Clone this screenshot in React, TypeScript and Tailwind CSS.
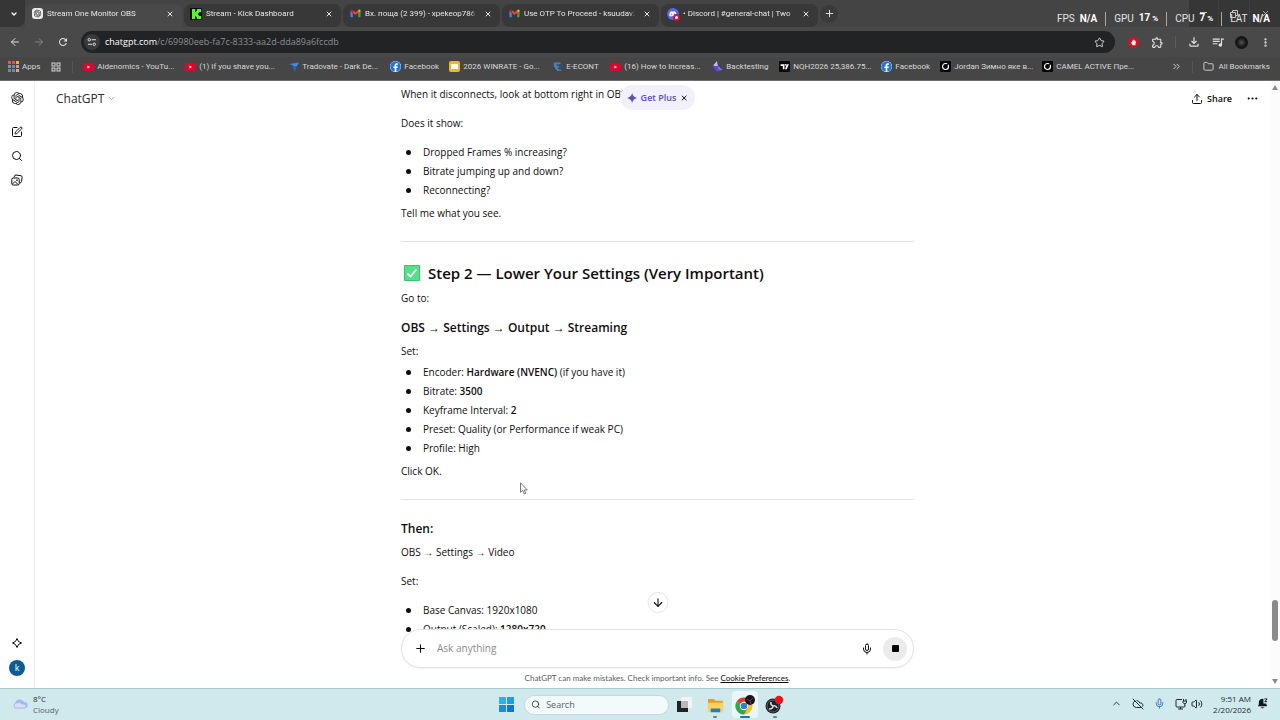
import type { ReactNode } from "react";
import {
  ArrowDown,
  ArrowLeft,
  ArrowRight,
  ChevronDown,
  ChevronUp,
  ChevronsRight,
  CloudOff,
  Ellipsis,
  EllipsisVertical,
  Folder,
  Mic,
  Plus,
  Search,
  SquarePen,
  Star,
  Upload,
  Volume2,
  X,
} from "lucide-react";
import { FaDiscord, FaFacebook } from "react-icons/fa";
import {
  MdOutlineExtension,
  MdOutlineFileDownload,
  MdOutlineGridView,
  MdOutlineQueueMusic,
  MdRefresh,
} from "react-icons/md";
import { RiOpenaiFill } from "react-icons/ri";

function GmailIcon() {
  return (
    <svg viewBox="0 0 24 18" className="w-[11px]" aria-hidden>
      <path d="M1 4v12q0 2 2 2h3V8z" fill="#4285f4" />
      <path d="M23 4v12q0 2-2 2h-3V8z" fill="#34a853" />
      <path d="M18 8V2l2-1q3 0 3 3v1z" fill="#fbbc04" />
      <path d="M6 8V2l6 5 6-5v6l-6 5z" fill="#ea4335" />
      <path d="M1 5V4q0-3 3-3l2 1v6z" fill="#c5221f" />
    </svg>
  );
}

function KickIcon() {
  return (
    <svg viewBox="0 0 12 12" className="w-3" aria-hidden>
      <path d="M0 0h12v12H0z" fill="#0b0e0f" />
      <path
        d="M2 1h3v3h1V3h1V1h4v3H9v1H8v2h1v1h2v3H7V9H6V8H5v3H2z"
        fill="#53fc18"
      />
    </svg>
  );
}

function DiscordIcon() {
  return (
    <span className="relative flex size-3 items-center justify-center rounded-full bg-[#5865f2]">
      <FaDiscord size={8} color="#fff" />
      <span className="absolute -right-px -bottom-px flex size-[7px] items-center justify-center rounded-full bg-[#d8101f]">
        <span className="size-[3px] rounded-full bg-white" />
      </span>
    </span>
  );
}

function YoutubeIcon() {
  return (
    <svg viewBox="0 0 22 16" className="w-[11px]" aria-hidden>
      <rect width="22" height="16" rx="4" fill="#e6002d" />
      <path d="M9 5l5 3-5 3z" fill="#fff" />
    </svg>
  );
}

function TradovateIcon() {
  return (
    <svg viewBox="0 0 20 20" className="w-[10px]" aria-hidden>
      <path d="M0 4l20-3-5 8H9L7 6z" fill="#3b8df0" />
      <path d="M9 8h6l-3 11-3-3z" fill="#2467c9" />
    </svg>
  );
}

function SlidesIcon() {
  return (
    <span className="flex size-[11px] items-center justify-center rounded-[2px] bg-[#f5b912]">
      <span className="h-[5px] w-[7px] bg-white" />
    </span>
  );
}

function EcontIcon() {
  return (
    <svg viewBox="0 0 20 20" className="w-[10px]" aria-hidden>
      <path d="M1 1h14v4H7l1 3h7v3H9l1 3h7v4H8L2 9z" fill="#4a7fb5" />
      <path d="M12 5l5-1v11l-4 2z" fill="#274e7e" />
    </svg>
  );
}

function BacktestIcon() {
  return (
    <svg viewBox="0 0 20 20" className="w-[11px]" aria-hidden>
      <path d="M9 0l2 11-9-3z" fill="#c9b6ff" />
      <path d="M1 10l9-1 9 8-10 2z" fill="#6a3fe0" />
      <path d="M11 9l8 8-7-2z" fill="#4aa4f5" />
    </svg>
  );
}

function TradingViewIcon() {
  return (
    <svg viewBox="0 0 20 20" className="w-[11px]" aria-hidden>
      <rect width="20" height="20" rx="2" fill="#0a0a0a" />
      <path d="M3 6h7v9H7V9H3zM14 6h4l-4 9h-3z" fill="#fff" />
      <circle cx="12" cy="7" r="1.5" fill="#fff" />
    </svg>
  );
}

function ShopIcon() {
  return (
    <svg viewBox="0 0 22 22" className="w-[11px]" aria-hidden>
      <rect width="22" height="22" rx="2" fill="#050505" />
      <circle cx="11" cy="11" r="6" fill="none" stroke="#fff" strokeWidth="2.4" />
      <path d="M11 11l6-6" stroke="#050505" strokeWidth="3" />
    </svg>
  );
}

const tabs: { title: string; icon: ReactNode; active?: boolean }[] = [
  {
    title: "Stream One Monitor OBS",
    active: true,
    icon: (
      <span className="flex size-[11px] items-center justify-center rounded-[3px] bg-[#ececec]">
        <RiOpenaiFill size={9} color="#222" />
      </span>
    ),
  },
  { title: "Stream - Kick Dashboard", icon: <KickIcon /> },
  { title: "Вх. поща (2 399) - xpekeop786", icon: <GmailIcon /> },
  { title: "Use OTP To Proceed - ksuudav2", icon: <GmailIcon /> },
  { title: "• Discord | #general-chat | Two", icon: <DiscordIcon /> },
];

const facebook = <FaFacebook size={11} color="#1b74e8" className="rounded-full bg-white" />;

const bookmarks: { title: string; icon: ReactNode; width: string }[] = [
  { title: "Aidenomics - YouTu...", icon: <YoutubeIcon />, width: "w-[102px]" },
  { title: "(1) If you shave you...", icon: <YoutubeIcon />, width: "w-[103px]" },
  { title: "Tradovate - Dark De...", icon: <TradovateIcon />, width: "w-[102px]" },
  { title: "Facebook", icon: facebook, width: "w-[59px]" },
  { title: "2026 WINRATE - Go...", icon: <SlidesIcon />, width: "w-[103px]" },
  { title: "E-ECONT", icon: <EcontIcon />, width: "w-[58px]" },
  { title: "(16) How to Increas...", icon: <YoutubeIcon />, width: "w-[102px]" },
  { title: "Backtesting", icon: <BacktestIcon />, width: "w-[67px]" },
  { title: "NQH2026 25,386.75...", icon: <TradingViewIcon />, width: "w-[102px]" },
  { title: "Facebook", icon: facebook, width: "w-[59px]" },
  { title: "Jordan Зимно яке в...", icon: <ShopIcon />, width: "w-[102px]" },
  { title: "CAMEL ACTIVE Пре...", icon: <ShopIcon />, width: "w-[102px]" },
];

const appColors = [
  "bg-[#e2574c]",
  "bg-[#d9534a]",
  "bg-[#e6b13c]",
  "bg-[#5bb55f]",
  "bg-[#4f8fe8]",
  "bg-[#d9a63c]",
  "bg-[#53a65a]",
  "bg-[#4f8fe8]",
  "bg-[#e6b13c]",
];

const stats = [
  { label: "FPS", value: "N/A" },
  { label: "GPU", value: "17", unit: "%" },
  { label: "CPU", value: "7", unit: "%" },
  { label: "LAT", value: "N/A" },
];

function TabStrip() {
  return (
    <div className="relative flex h-[27px] items-center bg-[#444444]">
      <button
        type="button"
        aria-label="Search tabs"
        className="flex h-full w-[25px] shrink-0 items-center justify-center rounded-br-lg bg-[#363636] pl-0.5 text-white"
      >
        <ChevronDown size={8} strokeWidth={4} />
      </button>
      <div role="tablist" className="flex h-full min-w-0 items-end">
        {tabs.map((tab) => (
          <div
            key={tab.title}
            className={`flex h-[23px] w-[159px] items-center gap-1 border-r-2 border-[#444444] pr-2 pb-1 pl-1.5 ${
              tab.active ? "rounded-t-lg bg-[#494949]" : "rounded-lg bg-[#383838]"
            }`}
          >
            <span className="flex w-3 shrink-0 justify-center">{tab.icon}</span>
            <button
              type="button"
              role="tab"
              aria-selected={!!tab.active}
              className="min-w-0 flex-1 overflow-hidden mask-r-from-95% text-left font-['Roboto','Noto_Sans',sans-serif] text-[8px] whitespace-nowrap text-[#e6e6e6]"
            >
              {tab.title}
            </button>
            <button type="button" aria-label="Close tab" className="ml-1 text-[#e6e6e6]">
              <X size={8} strokeWidth={3} />
            </button>
          </div>
        ))}
      </div>
      <button
        type="button"
        aria-label="New tab"
        className="flex size-[18px] items-center justify-center rounded-full bg-[#3a3a3a] text-[#e6e6e6]"
      >
        <Plus size={11} strokeWidth={2} />
      </button>
      <div className="ml-auto flex h-full bg-[#363636] text-[#c8c8c8]">
        <button type="button" aria-label="Minimize" className="flex w-[30px] justify-center border-r border-[#3e3e3e] pt-3">
          <span className="h-px w-[7px] bg-current" />
        </button>
        <button type="button" aria-label="Restore" className="flex w-[31px] items-center justify-center border-r border-[#3e3e3e]">
          <svg width="8" height="8" viewBox="0 0 8 8" fill="none" stroke="currentColor" aria-hidden>
            <path d="M.5 2.5h5v5h-5zM2.5 2V.5h5v5H6" />
          </svg>
        </button>
        <button type="button" aria-label="Close window" className="flex w-[30px] items-center justify-center">
          <X size={9} />
        </button>
      </div>

      {/* Performance overlay, drawn over the window controls */}
      <div className="pointer-events-none absolute top-2.5 right-2.5 flex items-center font-['Roboto',sans-serif] text-[10px] leading-4 text-[#e4e4e4]">
        {stats.map((s, i) => (
          <span key={s.label} className="flex items-center whitespace-nowrap">
            {i > 0 && <span className="mx-2 h-3.5 w-px bg-[#a8a8a8]" />}
            {s.label}
            <strong className="ml-[5px] font-bold text-white">
              {s.value}
              {s.unit && <small className="ml-0.5 text-[8px]">{s.unit}</small>}
            </strong>
          </span>
        ))}
      </div>
    </div>
  );
}

function Toolbar() {
  return (
    <div className="flex h-[30px] items-center bg-[#494949] pr-[9px] pl-[9px] text-[#e0e0e0]">
      <div className="flex items-center gap-3">
        <button type="button" aria-label="Back">
          <ArrowLeft size={12} />
        </button>
        <button type="button" aria-label="Forward" className="text-[#858585]">
          <ArrowRight size={12} />
        </button>
        <button type="button" aria-label="Reload">
          <MdRefresh size={12} />
        </button>
      </div>
      <div className="ml-3 flex h-[22px] flex-1 items-center gap-[5px] rounded-full bg-[#212324] pr-2.5 pl-[3px]">
        <button
          type="button"
          aria-label="Site information"
          className="flex size-4 items-center justify-center rounded-full bg-[#383a3b]"
        >
          <svg width="10" height="10" viewBox="0 0 20 20" fill="none" stroke="currentColor" strokeWidth="2" aria-hidden>
            <circle cx="4.500" cy="5.500" r="2.500" />
            <path d="M9 5.500h9M2 14.500h8" />
            <circle cx="14.500" cy="14.500" r="2.500" />
          </svg>
        </button>
        <a href="#url" className="flex-1 text-[9px] text-[#8d8f91]">
          <span className="text-white">chatgpt.com</span>/c/69980eeb-fa7c-8333-aa2d-dda89a6fccdb
        </a>
        <button type="button" aria-label="Bookmark this tab">
          <Star size={11} />
        </button>
      </div>
      <div className="ml-[13px] flex items-center">
        <button
          type="button"
          aria-label="Ad blocker"
          className="flex size-[11px] items-center justify-center rounded-full bg-[#d8101f]"
        >
          <svg viewBox="0 0 10 10" className="w-[7px]" fill="#fff" aria-hidden>
            <path d="M3 2.5V5L2 4.5 1.5 5 3.5 9h4L8 6V2.5H7V2H6V1H4.5v1z" />
          </svg>
        </button>
        <button type="button" aria-label="Extensions" className="ml-3">
          <MdOutlineExtension size={13} />
        </button>
        <span className="mx-[11px] h-3 w-px bg-[#5c5c5c]" />
        <button type="button" aria-label="Downloads">
          <MdOutlineFileDownload size={14} />
        </button>
        <button type="button" aria-label="Media controls" className="ml-2.5">
          <MdOutlineQueueMusic size={14} />
        </button>
        <span className="ml-2.5 size-[13px] rounded-full bg-radial from-[#555] via-[#161616] to-[#0a0a0a]" />
        <button type="button" aria-label="Menu" className="ml-3">
          <EllipsisVertical size={11} strokeWidth={3} />
        </button>
      </div>
    </div>
  );
}

function BookmarksBar() {
  return (
    <nav className="flex h-6 items-center border-b border-[#6f6f6f] bg-[#464646] pb-1 pl-2 font-['Roboto','Noto_Sans',sans-serif] text-[8px] text-[#d8d8d8]">
      <a href="#apps" className="flex items-center gap-[3px]">
        <span className="grid grid-cols-3 gap-px">
          {appColors.map((c, i) => (
            <span key={i} className={`size-[3px] ${c}`} />
          ))}
        </span>
        Apps
      </a>
      <a href="#groups" aria-label="Tab groups" className="ml-2.5">
        <MdOutlineGridView size={12} />
      </a>
      <span className="mx-2.5 h-3 w-px bg-[#555]" />
      <div className="flex min-w-0 overflow-hidden whitespace-nowrap">
        {bookmarks.map((b, i) => (
          <a key={i} href="#bookmark" className={`flex shrink-0 items-center gap-[3px] ${b.width}`}>
            <span className="flex w-[11px] shrink-0 justify-center">{b.icon}</span>
            {b.title}
          </a>
        ))}
      </div>
      <div className="ml-auto flex shrink-0 items-center gap-2.5 pr-2.5">
        <ChevronsRight size={11} />
        <span className="h-3 w-px bg-[#555]" />
        <a href="#all" className="flex items-center gap-1">
          <Folder size={11} />
          All Bookmarks
        </a>
      </div>
    </nav>
  );
}

function Sidebar() {
  return (
    <aside className="flex w-[35px] shrink-0 flex-col items-center border-r border-[#ededed] pt-2.5 pb-3">
      <a href="#home" aria-label="Home">
        <RiOpenaiFill size={15} />
      </a>
      <div className="mt-5 flex flex-col gap-3">
        <button type="button" aria-label="New chat">
          <SquarePen size={12} />
        </button>
        <button type="button" aria-label="Search chats">
          <Search size={12} />
        </button>
        <button type="button" aria-label="Images">
          <svg width="12" height="12" viewBox="0 0 24 24" fill="none" stroke="currentColor" strokeWidth="2" aria-hidden>
            <rect x="1.500" y="8" width="15" height="14" rx="3" />
            <path d="M6 7l1-3q.7-2.300 3-2l10 1.500q2.500.500 2.300 3L21 15q-.5 2.500-3 3" />
            <path d="M3 20l5-5 6 6" />
            <circle cx="12" cy="12.500" r="1" />
          </svg>
        </button>
      </div>
      <button type="button" aria-label="Upgrade" className="mt-auto">
        <svg width="10" height="10" viewBox="0 0 20 20" fill="none" stroke="currentColor" strokeWidth="2" aria-hidden>
          <path d="M10 1q1.500 7.500 9 9-7.500 1.500-9 9-1.500-7.500-9-9 7.500-1.500 9-9z" />
        </svg>
      </button>
      <button
        type="button"
        className="mt-3 flex size-4 items-center justify-center rounded-full bg-[#0b5c94] text-[9px] text-white"
      >
        k
      </button>
    </aside>
  );
}

function Bullet({ children }: { children: ReactNode }) {
  return (
    <li className="flex items-center gap-3 pl-[5px]">
      <span className="size-[5px] shrink-0 rounded-full bg-[#0d0d0d]" />
      <span>{children}</span>
    </li>
  );
}

function Conversation() {
  return (
    <article className="mx-auto w-full max-w-[513px] pt-1 text-[10px] leading-[19px]">
      <p>When it disconnects, look at bottom right in OBS.</p>
      <p className="my-2.5">Does it show:</p>
      <ul>
        <Bullet>Dropped Frames % increasing?</Bullet>
        <Bullet>Bitrate jumping up and down?</Bullet>
        <Bullet>Reconnecting?</Bullet>
      </ul>
      <p className="mt-1">Tell me what you see.</p>
      <hr className="mt-[18px] mb-[19px] border-[#e3e3e3]" />
      <h2 className="flex items-center gap-2 pl-[3px] text-[15px] leading-6 font-semibold">
        <svg width="16" height="16" viewBox="0 0 16 16" role="img" aria-label="Done">
          <rect width="16" height="16" rx="1" fill="#35c46b" />
          <rect x="1" y="1" width="14" height="14" fill="#55df87" />
          <path d="M3.500 8.500l3 3 6-7" fill="none" stroke="#fff" strokeWidth="1.800" />
        </svg>
        Step 2 — Lower Your Settings (Very Important)
      </h2>
      <p className="mt-1">Go to:</p>
      <h3 className="mt-2.5 text-xs leading-5 font-semibold">
        OBS → Settings → Output → Streaming
      </h3>
      <p className="mt-1">Set:</p>
      <ul className="mt-0.5">
        <Bullet>
          Encoder: <strong className="font-semibold">Hardware (NVENC)</strong> (if you have it)
        </Bullet>
        <Bullet>
          Bitrate: <strong className="font-semibold">3500</strong>
        </Bullet>
        <Bullet>
          Keyframe Interval: <strong className="font-semibold">2</strong>
        </Bullet>
        <Bullet>Preset: Quality (or Performance if weak PC)</Bullet>
        <Bullet>Profile: High</Bullet>
      </ul>
      <p className="mt-1">Click OK.</p>
      <hr className="mt-[18px] mb-[19px] border-[#e3e3e3]" />
      <h3 className="text-xs leading-5 font-semibold">Then:</h3>
      <p className="mt-1">OBS → Settings → Video</p>
      <p className="my-2.5">Set:</p>
      <ul>
        <Bullet>Base Canvas: 1920x1080</Bullet>
        <Bullet>
          Output (Scaled): <strong className="font-semibold">1280x720</strong>
        </Bullet>
      </ul>
    </article>
  );
}

function Composer() {
  return (
    <footer className="relative z-10 mx-auto -mt-5 w-full max-w-[513px]">
      <form className="flex h-[39px] items-center rounded-full border border-[#e2e2e2] bg-white pr-1.5 pl-3 shadow-xs">
        <button type="button" aria-label="Add files">
          <Plus size={13} />
        </button>
        <input
          type="text"
          aria-label="Ask anything"
          placeholder="Ask anything"
          className="ml-2.5 min-w-0 flex-1 text-[10px] outline-none placeholder:text-[#8b8b8b]"
        />
        <button type="button" aria-label="Dictate">
          <Mic size={12} />
        </button>
        <button
          type="button"
          aria-label="Stop"
          className="ml-2.5 flex size-6 items-center justify-center rounded-full bg-[#ebebeb]"
        >
          <span className="size-[7px] rounded-[1px] bg-black" />
        </button>
      </form>
      <p className="text-center font-['Lato',sans-serif] text-[8px] leading-5 text-[#5d5d5d]">
        ChatGPT can make mistakes. Check important info. See{" "}
        <a href="#cookies" className="text-[#0d0d0d] underline">
          Cookie Preferences
        </a>
        .
      </p>
    </footer>
  );
}

function ChatPage() {
  return (
    <main className="relative flex min-w-0 flex-1 flex-col">
      <div className="absolute inset-x-0 top-0 z-10 flex h-[35px] items-center justify-between pr-[21px] pl-[21px]">
        <button type="button" className="flex items-center gap-[3px] text-[12px] text-[#2b2b2b]">
          ChatGPT
          <ChevronDown size={9} className="text-[#8a8a8a]" />
        </button>
        <div className="flex items-center gap-3.5">
          <button type="button" className="flex items-center gap-1 text-[9px] font-semibold">
            <Upload size={12} />
            Share
          </button>
          <button type="button" aria-label="More">
            <Ellipsis size={13} strokeWidth={2} />
          </button>
        </div>
      </div>
      <div className="absolute top-1 left-1/2 z-10 flex h-[25px] -translate-x-1/2 items-center gap-1 rounded-full bg-[#f2f0fb] px-[7px] text-[9px] font-semibold text-[#5d50b8]">
        <svg width="10" height="10" viewBox="0 0 20 20" fill="currentColor" aria-hidden>
          <path d="M10 0q1.500 8 10 10-8.500 2-10 10-1.500-8-10-10 8.500-2 10-10z" />
        </svg>
        <button type="button">Get Plus</button>
        <button type="button" aria-label="Dismiss" className="text-[#0d0d0d]">
          <X size={8} strokeWidth={3} />
        </button>
      </div>

      <div className="relative min-h-0 flex-1 overflow-hidden">
        <Conversation />
        <button
          type="button"
          aria-label="Scroll to bottom"
          className="absolute bottom-9 left-1/2 flex size-[21px] -translate-x-1/2 items-center justify-center rounded-full border border-[#e6e6e6] bg-white"
        >
          <ArrowDown size={13} />
        </button>
        {/* Mouse pointer */}
        <svg
          className="absolute top-[401px] left-[485px]"
          width="8"
          height="13"
          viewBox="0 0 8 13"
          fill="#fff"
          stroke="#555"
          strokeWidth=".8"
          aria-hidden
        >
          <path d="M.5.800v9.500l2.200-2 1.600 3.700 1.500-.7L4.300 8h3z" />
        </svg>
      </div>
      <Composer />

      <div className="absolute inset-y-0 right-0 flex w-[10px] flex-col items-center justify-between bg-[#fcfcfc] py-1">
        <span className="border-x-[3px] border-b-[5px] border-x-transparent border-b-[#8a8a8a]" />
        <span className="mt-auto mb-[38px] h-[41px] w-[6px] rounded-full bg-[#8a8a8a]" />
        <span className="border-x-[3px] border-t-[5px] border-x-transparent border-t-[#8a8a8a]" />
      </div>
    </main>
  );
}

function ChromeIcon() {
  return (
    <svg viewBox="0 0 22 22" className="w-[22px]" aria-hidden>
      <circle cx="10" cy="12" r="8.500" fill="#fbc116" />
      <path d="M10 12L2.600 7.700A8.500 8.500 0 0 1 17.400 7.700H10z" fill="#e33b2e" />
      <path d="M10 12l-7.400-4.300A8.500 8.500 0 0 0 10 20.500l3.700-6.400z" fill="#2da94f" />
      <circle cx="10" cy="12" r="4.200" fill="#fff" />
      <circle cx="10" cy="12" r="3.300" fill="#2f7de1" />
      <circle cx="16" cy="6" r="5" fill="#1a1514" />
      <path d="M13 5l3 2 3-3M16 7l1 3" stroke="#574a42" fill="none" />
    </svg>
  );
}

function ObsIcon() {
  return (
    <svg viewBox="0 0 20 20" className="w-5" aria-hidden>
      <circle cx="8" cy="11" r="7.500" fill="#20202a" />
      <circle cx="8" cy="11" r="6" fill="none" stroke="#77777f" strokeWidth=".7" />
      <path
        d="M8 11q-3-1-2-4M8 11q3-1 4 2M8 11q0 3-4 3"
        fill="none"
        stroke="#d5d5dc"
        strokeWidth="1.600"
      />
      <circle cx="14" cy="5" r="4.200" fill="#f0101c" />
    </svg>
  );
}

function Taskbar() {
  return (
    <footer className="grid h-8 shrink-0 grid-cols-[1fr_auto_1fr] items-center border-t border-[#a8cccf] bg-[#d0e9ec] text-[8px] leading-[11px] text-[#1d2b2e]">
      <button type="button" className="flex items-center gap-[5px] pb-0.5 pl-3 text-left">
        <svg viewBox="0 0 20 14" className="w-4" aria-hidden>
          <path d="M4 13a4 4 0 0 1 0-7 6 6 0 0 1 11-1 4 4 0 0 1 1 8z" fill="#a9b8ea" />
          <path d="M4 12a3 3 0 0 1 1-5q5-2 7 1 5-1 5 4z" fill="#d6ddf7" />
        </svg>
        <span>
          8°C
          <br />
          <span className="text-[#546468]">Cloudy</span>
        </span>
      </button>

      <div className="flex h-full items-center pl-2.5">
        <button type="button" aria-label="Start" className="grid grid-cols-2 gap-px">
          <span className="size-[7px] bg-[#2fb0ee]" />
          <span className="size-[7px] bg-[#1e9ce4]" />
          <span className="size-[7px] bg-[#1b8fdc]" />
          <span className="size-[7px] bg-[#0d78cf]" />
        </button>
        <label className="ml-2.5 flex h-[20px] w-[145px] items-center gap-1.5 rounded-full border border-[#c5dadd] bg-[#f2fafb] px-1.5">
          <Search size={11} strokeWidth={2} />
          <input
            type="text"
            aria-label="Search"
            placeholder="Search"
            className="w-full min-w-0 text-[9px] outline-none placeholder:text-[#54666a]"
          />
        </label>
        <div className="flex h-full items-center">
          <button type="button" aria-label="Task view" className="flex h-full w-[30px] items-center justify-center">
            <svg viewBox="0 0 16 16" className="w-4" aria-hidden>
              <rect x="5" width="11" height="11" fill="#f4f4f4" />
              <path d="M1 4h4v7h7v4H1z" fill="#222" />
              <rect x="5" y="4" width="7" height="7" fill="#b9b9b9" />
            </svg>
          </button>
          <button type="button" aria-label="File Explorer" className="flex h-full w-[33px] flex-col items-center justify-end gap-[3px] pb-0.5">
            <svg viewBox="0 0 18 16" className="w-[17px]" aria-hidden>
              <path d="M1 2q0-1 1-1h5l2 2h7q1 0 1 1v10H1z" fill="#e0a21c" />
              <path d="M1 5h16v9q0 1-1 1H2q-1 0-1-1z" fill="#ffd257" />
              <path d="M4 15v-3q0-1 1-1h8q1 0 1 1v3z" fill="#1c7fc9" />
            </svg>
            <span className="h-0.5 w-1 rounded-full bg-[#6e8083]" />
          </button>
          <button type="button" aria-label="Chrome" className="flex h-[27px] w-[26px] flex-col items-center justify-end rounded-sm bg-[#eaf6f7]">
            <ChromeIcon />
            <span className="h-0.5 w-2.5 rounded-full bg-[#1674c8]" />
          </button>
          <button type="button" aria-label="OBS Studio" className="flex h-full w-[34px] flex-col items-center justify-end gap-px pb-0.5">
            <ObsIcon />
            <span className="h-0.5 w-1 rounded-full bg-[#6e8083]" />
          </button>
        </div>
      </div>

      <div className="flex items-center justify-end pr-3 pb-0.5">
        <ChevronUp size={11} />
        <CloudOff size={12} className="ml-2.5" />
        <Mic size={11} className="ml-2.5 text-[#3a6fb5]" />
        <svg viewBox="0 0 24 24" className="ml-2.5 w-3" fill="none" stroke="currentColor" strokeWidth="2" aria-hidden>
          <path d="M14 3H4q-2 0-2 2v11q0 2 2 2h14q2 0 2-2v-2M6 22h10M11 18v4" />
          <path d="M17 2v4M22 2v4M16 6h7v3q0 2-3.500 2T16 9zM19.500 11v4" />
        </svg>
        <Volume2 size={12} className="ml-1" />
        <time className="ml-2.5 text-right">
          9:51 AM
          <br />
          2/20/2026
        </time>
        <svg viewBox="0 0 12 12" className="ml-1.5 w-[11px]" aria-hidden>
          <path d="M2 5a4 4 0 0 1 5-4v5h3l1 3H1l1-2zM4 10h4l-2 1.500z" fill="#101718" />
          <path d="M8 1h3L8.500 4H11" fill="none" stroke="#101718" />
        </svg>
      </div>
    </footer>
  );
}

export default function App() {
  return (
    <div className="flex h-screen flex-col overflow-hidden bg-white font-['Open_Sans','Noto_Sans',sans-serif] text-[#0d0d0d]">
      <header className="shrink-0">
        <TabStrip />
        <Toolbar />
        <BookmarksBar />
      </header>
      <div className="flex min-h-0 flex-1">
        <Sidebar />
        <ChatPage />
      </div>
      <Taskbar />
    </div>
  );
}
